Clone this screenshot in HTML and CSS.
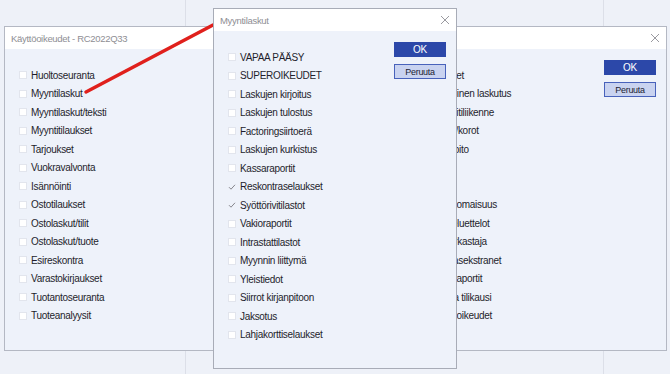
FILE: index.html
```html
<!DOCTYPE html>
<html>

<head>
    <title>Käyttöoikeudet</title>
    <link rel="stylesheet" href="styles.css">
</head>

<body>
    <div class="desktop">
        <div class="backdrop">
            <div class="pane pane-left"></div>
            <div class="pane pane-mid"></div>
            <div class="pane pane-right"></div>
        </div>

        <div class="window window-main">
            <div class="titlebar">
                <span>Käyttöoikeudet - RC2022Q33</span>
                <svg class="close" width="8" height="8" viewBox="0 0 8 8"><path d="M0 0L8 8M8 0L0 8" /></svg>
            </div>
            <div class="window-body">
                <ul class="checklist col-first">
                    <li><span class="box"></span>Huoltoseuranta</li>
                    <li><span class="box"></span>Myyntilaskut</li>
                    <li><span class="box"></span>Myyntilaskut/teksti</li>
                    <li><span class="box"></span>Myyntitilaukset</li>
                    <li><span class="box"></span>Tarjoukset</li>
                    <li><span class="box"></span>Vuokravalvonta</li>
                    <li><span class="box"></span>Isännöinti</li>
                    <li><span class="box"></span>Ostotilaukset</li>
                    <li><span class="box"></span>Ostolaskut/tilit</li>
                    <li><span class="box"></span>Ostolaskut/tuote</li>
                    <li><span class="box"></span>Esireskontra</li>
                    <li><span class="box"></span>Varastokirjaukset</li>
                    <li><span class="box"></span>Tuotantoseuranta</li>
                    <li><span class="box"></span>Tuoteanalyysit</li>
                </ul>
                <ul class="checklist">
                    <li><span class="box"></span>Tuotteet</li>
                    <li><span class="box"></span>Sähköinen laskutus</li>
                    <li><span class="box"></span>Pankkitiliikenne</li>
                    <li><span class="box"></span>Lainat/korot</li>
                    <li><span class="box"></span>Kirjanpito</li>
                    <li><span class="box"></span>Palkat</li>
                    <li><span class="box"></span>Alv</li>
                    <li><span class="box"></span>Käyttöomaisuus</li>
                    <li><span class="box"></span>Osoiteluettelot</li>
                    <li><span class="box"></span>Tilintarkastaja</li>
                    <li><span class="box"></span>Asiakasekstranet</li>
                    <li><span class="box"></span>Muut raportit</li>
                    <li><span class="box"></span>Kuluva tilikausi</li>
                    <li><span class="box"></span>Käyttöoikeudet</li>
                </ul>
                <div class="buttons">
                    <button class="btn btn-ok">OK</button>
                    <button class="btn btn-cancel">Peruuta</button>
                </div>
            </div>
        </div>

        <svg class="pointer" width="670" height="374" viewBox="0 0 670 374">
            <line x1="86" y1="92" x2="213" y2="25" />
        </svg>

        <div class="window window-dialog">
            <div class="titlebar">
                <span>Myyntilaskut</span>
                <svg class="close" width="8" height="8" viewBox="0 0 8 8"><path d="M0 0L8 8M8 0L0 8" /></svg>
            </div>
            <div class="window-body">
                <ul class="checklist">
                    <li><span class="box"></span>VAPAA PÄÄSY</li>
                    <li><span class="box"></span>SUPEROIKEUDET</li>
                    <li><span class="box"></span>Laskujen kirjoitus</li>
                    <li><span class="box"></span>Laskujen tulostus</li>
                    <li><span class="box"></span>Factoringsiirtoerä</li>
                    <li><span class="box"></span>Laskujen kurkistus</li>
                    <li><span class="box"></span>Kassaraportit</li>
                    <li><span class="box checked"><svg width="8" height="8" viewBox="0 0 8 8"><path d="M1 4.2L3 6.2L7 1.8" /></svg></span>Reskontraselaukset</li>
                    <li><span class="box checked"><svg width="8" height="8" viewBox="0 0 8 8"><path d="M1 4.2L3 6.2L7 1.8" /></svg></span>Syöttörivitilastot</li>
                    <li><span class="box"></span>Vakioraportit</li>
                    <li><span class="box"></span>Intrastattilastot</li>
                    <li><span class="box"></span>Myynnin liittymä</li>
                    <li><span class="box"></span>Yleistiedot</li>
                    <li><span class="box"></span>Siirrot kirjanpitoon</li>
                    <li><span class="box"></span>Jaksotus</li>
                    <li><span class="box"></span>Lahjakorttiselaukset</li>
                </ul>
                <div class="buttons">
                    <button class="btn btn-ok">OK</button>
                    <button class="btn btn-cancel">Peruuta</button>
                </div>
            </div>
        </div>
    </div>
</body>

</html>
```

FILE: styles.css
```css
body {
    margin: 0;
    width: 670px;
    height: 374px;
    overflow: hidden;
    background: #eef1f8;
    color: #1e1e2c;
    font-family: "Liberation Sans", Arial, sans-serif;
    font-size: 10px;
}

.desktop {
    position: relative;
    width: 670px;
    height: 374px;
}

.backdrop {
    display: flex;
    height: 100%;
}

.pane {
    height: 100%;
    border-right: 1px solid #dcdfe8;
}

.pane-left {
    width: 185px;
}

.pane-mid {
    width: 417px;
}

.pane-right {
    flex: 1;
    border-right: none;
}

.window {
    position: absolute;
    box-sizing: border-box;
    display: flex;
    flex-direction: column;
    background: #eef2fa;
    border: 1px solid #b4b8c3;
}

.window-main {
    left: 4px;
    top: 26px;
    width: 663px;
    height: 325px;
}

.window-dialog {
    left: 213px;
    top: 8px;
    width: 244px;
    height: 361px;
    border-color: #a8acb7;
}

.titlebar {
    height: 22px;
    flex-shrink: 0;
    display: flex;
    align-items: center;
    justify-content: space-between;
    padding: 0 7px 0 6px;
    background: white;
    color: #8e8e94;
    font-size: 9.5px;
    letter-spacing: -0.3px;
}

.close path {
    stroke: #9a9aa0;
    stroke-width: 1;
    fill: none;
}

.window-body {
    display: flex;
    flex: 1;
    padding-left: 14px;
    padding-right: 10px;
}

.checklist {
    list-style: none;
    margin: 0;
    padding: 17px 0 0 0;
}

.col-first {
    width: 399px;
    flex-shrink: 0;
}

.checklist li {
    display: flex;
    align-items: center;
    gap: 4px;
    height: 18.5px;
    white-space: nowrap;
    letter-spacing: -0.3px;
}

.box {
    box-sizing: border-box;
    width: 8px;
    height: 8px;
    flex-shrink: 0;
    background: white;
    border: 1px solid #e2e5ed;
}

.box.checked {
    background: none;
    border: none;
    display: flex;
}

.box.checked path {
    stroke: #85858c;
    stroke-width: 1;
    fill: none;
}

.buttons {
    margin-left: auto;
    padding-top: 11px;
    display: flex;
    flex-direction: column;
    gap: 7px;
}

.btn {
    box-sizing: border-box;
    width: 52px;
    height: 15px;
    padding: 0;
    border: 1px solid #2c48a9;
    font-family: "Liberation Sans", Arial, sans-serif;
    font-size: 9px;
    letter-spacing: -0.3px;
}

.btn-ok {
    background: #2c48a9;
    color: white;
    font-size: 10px;
}

.btn-cancel {
    background: #c9d3f0;
    border-color: #4862bb;
    color: #1d1d33;
}

.pointer {
    position: absolute;
    left: 0;
    top: 0;
    pointer-events: none;
}

.pointer line {
    stroke: #e0201c;
    stroke-width: 3.5;
    stroke-linecap: round;
}
```
